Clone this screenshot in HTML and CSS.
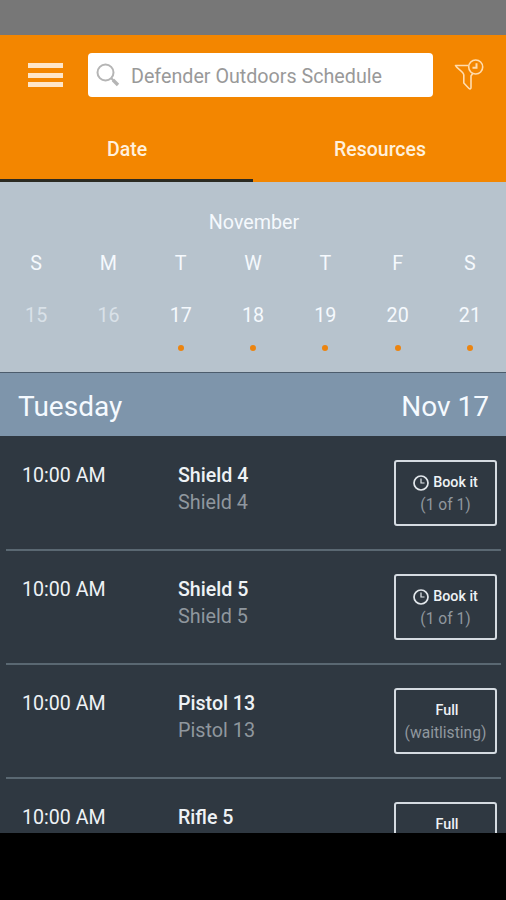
FILE: index.html
```
<!DOCTYPE html>
<html>
	<head>
		<meta charset="UTF-8">
		<title>Defender Outdoors Schedule</title>
		<link rel="stylesheet" href="styles.css">
	</head>
	<body>
		<div id="container">
			<div class="status"></div>
			<div class="header">
				<div class="toolbar">
					<div class="menu">
						<span></span>
						<span></span>
						<span></span>
					</div>
					<div class="search">
						<svg width="24" height="24" viewBox="0 0 24 24" fill="none" stroke="#b5b5b5">
							<circle cx="9.5" cy="9.5" r="8" stroke-width="2"/>
							<path d="M15.3 15.3L18 18" stroke-width="2"/>
							<path d="M17 17L22 22" stroke-width="3.4"/>
						</svg>
						<p>Defender Outdoors Schedule</p>
					</div>
					<svg class="filter" width="32" height="34" viewBox="0 0 32 34" fill="none" stroke="#ffdcae" stroke-width="1.6" stroke-linejoin="round">
						<path d="M15.5 7.5H2.5C4 11 10.5 13 10.8 17V25L16 30.5C17 31.3 18 30.8 18 29.5V18L19.8 15.2"/>
						<circle cx="22.7" cy="9" r="7"/>
						<path d="M23.5 5.2V9.8H19.5" stroke-width="2" stroke-linejoin="miter"/>
					</svg>
				</div>
				<div class="tabs">
					<div class="tab active">Date</div>
					<div class="tab">Resources</div>
				</div>
			</div>
			<div class="calendar">
				<p class="month">November</p>
				<div class="week">
					<span>S</span>
					<span>M</span>
					<span>T</span>
					<span>W</span>
					<span>T</span>
					<span>F</span>
					<span>S</span>
				</div>
				<div class="week days">
					<span class="past">15</span>
					<span class="past">16</span>
					<span class="open">17</span>
					<span class="open">18</span>
					<span class="open">19</span>
					<span class="open">20</span>
					<span class="open">21</span>
				</div>
			</div>
			<div class="day">
				<p>Tuesday</p>
				<p>Nov 17</p>
			</div>
			<div class="list">
				<div class="row">
					<p class="time">10:00 AM</p>
					<div class="name">
						<p>Shield 4</p>
						<p class="sub">Shield 4</p>
					</div>
					<div class="btn">
						<p>
							<svg width="16" height="16" viewBox="0 0 16 16" fill="none" stroke="#e3e8ec">
								<circle cx="8" cy="8" r="7" stroke-width="1.7"/>
								<path d="M8 3.5V8H11.5" stroke-width="1.2"/>
							</svg>
							Book it
						</p>
						<p class="sub">(1 of 1)</p>
					</div>
				</div>
				<div class="row">
					<p class="time">10:00 AM</p>
					<div class="name">
						<p>Shield 5</p>
						<p class="sub">Shield 5</p>
					</div>
					<div class="btn">
						<p>
							<svg width="16" height="16" viewBox="0 0 16 16" fill="none" stroke="#e3e8ec">
								<circle cx="8" cy="8" r="7" stroke-width="1.7"/>
								<path d="M8 3.5V8H11.5" stroke-width="1.2"/>
							</svg>
							Book it
						</p>
						<p class="sub">(1 of 1)</p>
					</div>
				</div>
				<div class="row">
					<p class="time">10:00 AM</p>
					<div class="name">
						<p>Pistol 13</p>
						<p class="sub">Pistol 13</p>
					</div>
					<div class="btn full">
						<p>Full</p>
						<p class="sub">(waitlisting)</p>
					</div>
				</div>
				<div class="row">
					<p class="time">10:00 AM</p>
					<div class="name">
						<p>Rifle 5</p>
					</div>
					<div class="btn full">
						<p>Full</p>
					</div>
				</div>
			</div>
		</div>
	</body>
</html>
```

FILE: styles.css
```
* {
	margin: 0px;
	padding: 0px;
	box-sizing: border-box;
}
body {
	background: #000;
	font-family: Roboto, "Liberation Sans", sans-serif;
	color: #fff;
}
#container {
	width: 506px;
	height: 900px;
	overflow: hidden;
	white-space: nowrap;
}
.status {
	height: 35px;
	background: #777;
}
/*orange top area*/
.header {
	height: 147px;
	background: #f38600;
}
.toolbar {
	display: flex;
	height: 80px;
	padding: 18px 0 0 28px;
}
.menu {
	width: 35px;
	margin: 10px 25px 0 0;
}
.menu span {
	display: block;
	height: 5px;
	margin-bottom: 4.5px;
	background: #ffe6c8;
}
.search {
	display: flex;
	align-items: center;
	width: 345px;
	height: 44px;
	padding-left: 8px;
	border-radius: 4px;
	background: #fff;
	color: #999;
	font-size: 19.7px;
}
.search p {
	margin: 3px 0 0 11px;
}
.filter {
	margin: 5px 0 0 20px;
}
.tabs {
	display: flex;
	height: 67px;
}
.tab {
	flex: 1;
	padding: 22px 0 0 1px;
	line-height: 26px;
	text-align: center;
	font-size: 19.5px;
	font-weight: 500;
	color: #fff0dc;
}
.active {
	border-bottom: 3px solid #2b2a22;
}
.calendar {
	height: 190px;
	padding-top: 28px;
	background: #b7c3cd;
	text-align: center;
	font-size: 19.7px;
	line-height: 26px;
	color: #f5f9fd;
}
.month {
	margin-bottom: 15px;
	padding-left: 2px;
}
.week {
	display: grid;
	grid-template-columns: repeat(7, 72.3px);
}
.days {
	margin-top: 26px;
}
.past {
	color: #d9e1e8;
}
/*dot under the days that can be booked*/
.open::after {
	content: "";
	display: block;
	width: 6px;
	height: 6px;
	margin: 16px auto 0;
	border-radius: 50%;
	background: #ec840f;
}
.day {
	display: flex;
	justify-content: space-between;
	height: 64px;
	padding: 0 17px 0 18px;
	border-top: 1px solid #4c5c6c;
	background: #7e95ab;
	font-size: 28px;
	line-height: 67px;
	color: #f5faff;
}
.list {
	height: 397px;
	padding-top: 1px;
	overflow: hidden;
	background: #2f3841;
}
.row {
	display: flex;
	height: 114px;
	margin: 0 5px 0 6px;
	padding-top: 23px;
	border-bottom: 2px solid #5a6872;
	font-size: 19.6px;
	line-height: 27px;
	color: #eef2f5;
}
.time {
	width: 172px;
	padding: 2px 0 0 16px;
}
.name {
	width: 216px;
	padding-top: 2px;
	font-weight: 500;
}
.name .sub {
	font-size: 19.8px;
	font-weight: 400;
}
.sub {
	color: #8f979e;
}
.btn {
	width: 103px;
	height: 66px;
	padding-top: 9px;
	border: 2px solid #d5dbe1;
	border-radius: 3px;
	text-align: center;
	font-size: 14.3px;
	line-height: 23px;
}
.btn p:first-child {
	display: flex;
	align-items: center;
	justify-content: center;
	gap: 4px;
	font-weight: 500;
}
.btn .sub {
	font-size: 15.6px;
}
.full p:first-child {
	padding-left: 3px;
}
```
